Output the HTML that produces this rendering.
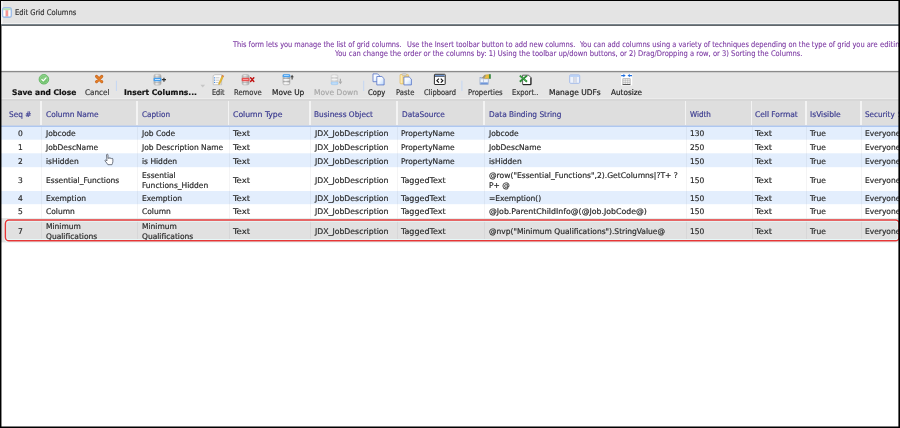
<!DOCTYPE html>
<html lang="en">
<head>
<meta charset="utf-8">
<title>Edit Grid Columns</title>
<style>
html,body{margin:0;padding:0;}
body{width:900px;height:428px;position:relative;overflow:hidden;background:#fff;font-family:"Liberation Sans",sans-serif;}
#win{position:absolute;left:0;top:0;width:900px;height:428px;overflow:hidden;background:#fff;will-change:transform;}
.b{position:absolute;}
.t{position:absolute;white-space:pre;line-height:10px;height:10px;font-family:'DejaVu Sans Condensed', 'Liberation Sans', sans-serif;transform-origin:0 50%;-webkit-text-stroke:0.18px;}
svg{position:absolute;overflow:visible;}
</style>
</head>
<body>
<div id="win">
<!-- title bar -->
<div class="b" style="left:0;top:0;width:900px;height:23px;background:#e4e4e4;"></div>
<div class="b" style="left:1px;top:1px;width:1.5px;height:23px;background:#f0f0f0;"></div>
<div class="b" style="left:0;top:23px;width:900px;height:1px;background:#f1f1f1;"></div>
<div class="b" style="left:0;top:24px;width:900px;height:1px;background:#79848b;"></div>
<div class="b" style="left:0;top:25px;width:900px;height:1px;background:#61666a;"></div>
<!-- info panel -->
<div class="b" style="left:0;top:26px;width:900px;height:45px;background:#fff;"></div>
<div class="b" style="left:0;top:70px;width:900px;height:1px;background:#f3f3f3;"></div>
<div class="b" style="left:0;top:71px;width:900px;height:1px;background:#8b8b8b;"></div>
<div class="b" style="left:0;top:72px;width:900px;height:1px;background:#cdcdcd;"></div>
<!-- toolbar -->
<div class="b" style="left:0;top:73px;width:900px;height:25px;background:#e5e5e5;"></div>
<div class="b" style="left:0;top:98px;width:900px;height:1px;background:#ececec;"></div>
<div class="b" style="left:0;top:99px;width:900px;height:2px;background:#d7d7d7;"></div>
<!-- header -->
<div class="b" style="left:0;top:101px;width:900px;height:24px;background:#dedede;"></div>
<div class="b" style="left:0;top:125px;width:900px;height:1px;background:#c9d3e6;"></div>
<div class="b" style="left:0;top:126px;width:900px;height:1px;background:#aec7f0;"></div>
<!-- rows -->
<svg width="900" height="428" viewBox="0 0 900 428" style="left:0;top:0;">
<rect x="0" y="127" width="900" height="12.7" fill="#e3eefd"/>
<rect x="0" y="153.3" width="900" height="13.9" fill="#e3eefd"/>
<rect x="0" y="191" width="900" height="13.2" fill="#e3eefd"/>
<rect x="0" y="218.1" width="900" height="24.3" fill="#e1e1e1"/>
</svg>
<!-- column separators -->
<div class="b" style="left:40.0px;top:101px;width:1.6px;height:24px;background:#f3f3f3;"></div>
<div class="b" style="left:41.0px;top:127px;width:1px;height:115px;background:rgba(60,70,90,0.06);"></div>
<div class="b" style="left:136.1px;top:101px;width:1.6px;height:24px;background:#f3f3f3;"></div>
<div class="b" style="left:137.1px;top:127px;width:1px;height:115px;background:rgba(60,70,90,0.06);"></div>
<div class="b" style="left:227.5px;top:101px;width:1.6px;height:24px;background:#f3f3f3;"></div>
<div class="b" style="left:228.5px;top:127px;width:1px;height:115px;background:rgba(60,70,90,0.06);"></div>
<div class="b" style="left:309.1px;top:101px;width:1.6px;height:24px;background:#f3f3f3;"></div>
<div class="b" style="left:310.1px;top:127px;width:1px;height:115px;background:rgba(60,70,90,0.06);"></div>
<div class="b" style="left:396.4px;top:101px;width:1.6px;height:24px;background:#f3f3f3;"></div>
<div class="b" style="left:397.4px;top:127px;width:1px;height:115px;background:rgba(60,70,90,0.06);"></div>
<div class="b" style="left:483.4px;top:101px;width:1.6px;height:24px;background:#f3f3f3;"></div>
<div class="b" style="left:484.4px;top:127px;width:1px;height:115px;background:rgba(60,70,90,0.06);"></div>
<div class="b" style="left:684.7px;top:101px;width:1.6px;height:24px;background:#f3f3f3;"></div>
<div class="b" style="left:685.7px;top:127px;width:1px;height:115px;background:rgba(60,70,90,0.06);"></div>
<div class="b" style="left:750.7px;top:101px;width:1.6px;height:24px;background:#f3f3f3;"></div>
<div class="b" style="left:751.7px;top:127px;width:1px;height:115px;background:rgba(60,70,90,0.06);"></div>
<div class="b" style="left:805.1px;top:101px;width:1.6px;height:24px;background:#f3f3f3;"></div>
<div class="b" style="left:806.1px;top:127px;width:1px;height:115px;background:rgba(60,70,90,0.06);"></div>
<div class="b" style="left:860.1px;top:101px;width:1.6px;height:24px;background:#f3f3f3;"></div>
<div class="b" style="left:861.1px;top:127px;width:1px;height:115px;background:rgba(60,70,90,0.06);"></div>
<!-- red highlight -->
<svg width="900" height="428" viewBox="0 0 900 428" style="left:0;top:0;">
<rect x="5.4" y="220.1" width="893.7" height="20.7" rx="3.6" fill="none" stroke="#e6f8f8" stroke-width="3.4"/>
<rect x="5.4" y="220.1" width="893.7" height="20.7" rx="3.6" fill="none" stroke="#e63636" stroke-width="1.5"/>
</svg>
<div id="soft" style="position:absolute;left:0;top:0;width:900px;height:428px;filter:blur(0.4px);">
<!--ICONS_START--><svg width="900" height="428" viewBox="0 0 900 428" style="left:0;top:0;">
<defs>
<linearGradient id="cyl" x1="0" x2="1" y1="0" y2="0"><stop offset="0" stop-color="#b4b4b4"/><stop offset="0.4" stop-color="#efefef"/><stop offset="1" stop-color="#a6a6a6"/></linearGradient>
<linearGradient id="cyld" x1="0" x2="1" y1="0" y2="0"><stop offset="0" stop-color="#cfcfcf"/><stop offset="0.45" stop-color="#ececec"/><stop offset="1" stop-color="#c8c8c8"/></linearGradient>
<linearGradient id="pg" x1="0" x2="1" y1="0" y2="1"><stop offset="0" stop-color="#ffffff"/><stop offset="0.45" stop-color="#f4f9ff"/><stop offset="1" stop-color="#b9d6fb"/></linearGradient>
<radialGradient id="grn" cx="0.5" cy="0.4" r="0.6"><stop offset="0" stop-color="#8fd48a"/><stop offset="0.7" stop-color="#6cc068"/><stop offset="1" stop-color="#4aa94a"/></radialGradient>
</defs>
<!-- title icon -->
<g>
<rect x="2.7" y="7.7" width="8.5" height="9.4" rx="1.8" fill="#eef4fc" stroke="#9fbde9" stroke-width="1.6"/>
<rect x="3.4" y="8.3" width="7" height="2" fill="#b4e2b4"/>
<rect x="5.5" y="10.3" width="2.8" height="6" fill="#f59696"/>
<rect x="3.4" y="10.3" width="1.8" height="6" fill="#fff"/>
<rect x="8.6" y="10.3" width="1.8" height="6" fill="#fff"/>
</g>
<!-- save and close -->
<circle cx="43.9" cy="79.3" r="4.8" fill="url(#grn)" stroke="#58b258" stroke-width="0.8"/>
<circle cx="43.9" cy="79.3" r="4" fill="none" stroke="#a4dba2" stroke-width="0.6"/>
<path d="M41.9 79.5 L43.3 80.9 L46 77.8" fill="none" stroke="#fff" stroke-width="1.25" stroke-linecap="round" stroke-linejoin="round"/>
<!-- cancel -->
<path d="M96.5 76.4 L101.8 81.7 M101.8 76.4 L96.5 81.7" stroke="#c96a22" stroke-width="3" stroke-linecap="round"/>
<path d="M96.6 76.5 L101.7 81.6 M101.7 76.5 L96.6 81.6" stroke="#e57f28" stroke-width="1.5" stroke-linecap="round"/>
<!-- separators -->
<rect x="115.9" y="80.7" width="1" height="10.3" fill="#c4d6f3"/>
<rect x="363.2" y="80.7" width="1" height="10.3" fill="#c4d6f3"/>
<rect x="461.4" y="80.7" width="1" height="10.3" fill="#c4d6f3"/>
<!-- insert columns -->
<g>
<rect x="153.9" y="74.3" width="7.2" height="10.8" rx="1.8" fill="url(#cyl)" stroke="#a8a8a8" stroke-width="0.5"/>
<rect x="154.2" y="76.6" width="6.6" height="0.7" fill="#9a9a9a" opacity="0.7"/><rect x="154.2" y="82.2" width="6.6" height="0.7" fill="#9a9a9a" opacity="0.7"/>
<rect x="153.6" y="77.8" width="7.8" height="3.5" rx="0.9" fill="#46a0f0"/>
<rect x="155" y="79.1" width="5" height="0.9" fill="#d8ecff"/>
<path d="M161.9 79.7 H166 M163.95 77.7 V81.7" stroke="#333" stroke-width="1.2"/>
</g>
<path d="M200.4 84.8 H205.1 L202.75 87.4 Z" fill="#c6c6c6"/>
<!-- edit -->
<g>
<path d="M213.2 75.6 L215 74.7 H221.6 V84.7 H213.2 Z" fill="#fbfbfb" stroke="#a9a9a9" stroke-width="0.6"/>
<rect x="214" y="77.3" width="1.2" height="1.1" fill="#4b8de0"/><rect x="214" y="79.6" width="1.2" height="1.1" fill="#4b8de0"/><rect x="214" y="81.9" width="1.2" height="1.1" fill="#4b8de0"/>
<rect x="215.9" y="77.5" width="3.6" height="0.7" fill="#b5b5b5"/><rect x="215.9" y="79.8" width="3.2" height="0.7" fill="#b5b5b5"/><rect x="215.9" y="82.1" width="2.6" height="0.7" fill="#b5b5b5"/>
<path d="M222.3 75.2 L223.7 75.9 L220 84 L218.6 84.6 L218.6 83.3 Z" fill="#f0c030" stroke="#b88a18" stroke-width="0.4"/>
<path d="M222.3 75.2 L223.7 75.9 L223.3 76.8 L221.9 76.1 Z" fill="#e05050"/>
</g>
<!-- remove -->
<g>
<rect x="242" y="74.5" width="7.2" height="10.4" rx="1.8" fill="url(#cyl)" stroke="#a8a8a8" stroke-width="0.5"/>
<rect x="242.3" y="76.6" width="6.6" height="0.7" fill="#9a9a9a" opacity="0.7"/><rect x="242.3" y="82.1" width="6.6" height="0.7" fill="#9a9a9a" opacity="0.7"/>
<rect x="241.7" y="77.8" width="7.8" height="3.5" rx="0.9" fill="#e85050"/>
<rect x="243" y="79.1" width="5.2" height="0.8" fill="#f6b4b4"/>
<path d="M250.6 77.8 L253.8 81.4 M253.8 77.8 L250.6 81.4" stroke="#c01414" stroke-width="1.5" stroke-linecap="round"/>
</g>
<!-- move up -->
<g>
<rect x="282.9" y="74.4" width="7.1" height="10.4" rx="1.8" fill="url(#cyl)" stroke="#a8a8a8" stroke-width="0.5"/>
<rect x="283.2" y="77.9" width="6.5" height="0.8" fill="#8e8e8e" opacity="0.75"/><rect x="283.2" y="81.3" width="6.5" height="0.8" fill="#8e8e8e" opacity="0.75"/>
<rect x="283.6" y="79.2" width="5.7" height="1.2" fill="#fbfbfb"/><rect x="283.6" y="82.6" width="5.7" height="1.2" fill="#fbfbfb"/>
<rect x="282.6" y="74.2" width="7.7" height="3" rx="1.2" fill="#46a0f0"/>
<rect x="284" y="75" width="4.8" height="1" fill="#a8d6ff"/>
<path d="M290.3 77.3 L292.1 74.7 L293.9 77.3 Z M291.5 77 H292.7 V79.4 H291.5 Z" fill="#4a4a4a"/>
</g>
<!-- move down (disabled) -->
<g>
<rect x="331" y="74.6" width="7" height="10.2" rx="1.8" fill="url(#cyld)" stroke="#cfcfcf" stroke-width="0.5"/>
<rect x="331.3" y="77.6" width="6.4" height="0.7" fill="#c4c4c4"/><rect x="331.3" y="80.8" width="6.4" height="0.7" fill="#c4c4c4"/>
<rect x="331.7" y="75.7" width="5.6" height="1.2" fill="#f3f3f3"/><rect x="331.7" y="78.9" width="5.6" height="1.2" fill="#f3f3f3"/>
<rect x="330.8" y="81.7" width="7.4" height="3.1" rx="1.2" fill="#a6cff6"/>
<rect x="332.2" y="82.7" width="4.6" height="0.9" fill="#cfe6fb"/>
<path d="M338.5 81.5 L340.4 84.2 L342.3 81.5 Z M339.8 78.8 H341 V81.7 H339.8 Z" fill="#a9a9a9"/>
</g>
<!-- copy -->
<g>
<path d="M373 73.9 H377.6 L379.5 75.8 V81.7 H373 Z" fill="url(#pg)" stroke="#4d6cc4" stroke-width="0.75"/>
<path d="M376.8 76.5 H381.9 L384.1 78.7 V84.9 H376.8 Z" fill="url(#pg)" stroke="#4d6cc4" stroke-width="0.75"/>
</g>
<!-- paste -->
<g>
<rect x="400" y="74.4" width="8.5" height="9.5" rx="1" fill="#f5d682" stroke="#dfb450" stroke-width="0.6"/><rect x="400.6" y="75.2" width="1.6" height="8" fill="#fbeab8"/>
<rect x="402.2" y="73.6" width="4.2" height="1.9" rx="0.8" fill="#d9d9d9" stroke="#a4a4a4" stroke-width="0.4"/>
<path d="M403.9 77 H409.2 L411.4 79.2 V84.9 H403.9 Z" fill="url(#pg)" stroke="#4d6cc4" stroke-width="0.75"/>
</g>
<!-- clipboard -->
<g>
<rect x="434.4" y="74.3" width="10.8" height="10.2" rx="0.6" fill="#fdfdfd" stroke="#2a2a2a" stroke-width="1"/>
<rect x="435" y="74.9" width="9.6" height="1.5" fill="#6d93cc"/>
<rect x="435" y="76.4" width="9.6" height="0.6" fill="#2a2a2a"/>
<path d="M438.9 78.7 L436.9 80.7 L438.9 82.7 M440.8 78.7 L442.8 80.7 L440.8 82.7" fill="none" stroke="#151515" stroke-width="1.15"/>
</g>
<!-- properties -->
<g>
<rect x="480" y="77.6" width="8.2" height="6.8" fill="#eef3fb" stroke="#7f97c4" stroke-width="0.6"/>
<rect x="480.3" y="82.4" width="7.6" height="1.8" fill="#6f96d8"/>
<rect x="480.3" y="77.9" width="7.6" height="1.4" fill="#b9c7de"/>
<rect x="483.4" y="79.4" width="0.6" height="3" fill="#9fb0cc"/>
<path d="M482.4 77.8 L484.6 75 L489.3 74.6 L489.3 78.3 L485.5 78.6 Z" fill="#e9bd3e" stroke="#b98d22" stroke-width="0.4"/>
<path d="M482.4 77.8 L484.6 75 L486 75.4 L484 78.4 Z" fill="#8f8f8f"/>
<rect x="489.2" y="74.2" width="1.5" height="4.6" fill="#1f7a2a"/>
</g>
<!-- export -->
<g>
<path d="M522.6 75.2 H528.6 L530.8 77.4 V84.5 H522.6 Z" fill="#fff" stroke="#3a3a3a" stroke-width="0.8"/>
<path d="M523 84.7 H531 V77.6" fill="none" stroke="#111" stroke-width="0.9"/>
<path d="M519.8 75.6 L527 81.8 M527 75.6 L519.8 81.8" stroke="#2c8e36" stroke-width="1.9"/><path d="M520.4 75.9 L526.4 81.3" stroke="#5fb868" stroke-width="0.6"/>
</g>
<!-- manage udfs -->
<g>
<rect x="569.7" y="74.9" width="10" height="8.4" rx="0.9" fill="#eef3fc" stroke="#8dacea" stroke-width="0.75"/>
<rect x="570.1" y="75.3" width="9.2" height="1.5" fill="#afcbf5"/>
<rect x="573.3" y="77" width="3" height="5.8" fill="#d9dce6"/>
<rect x="573.1" y="77" width="0.45" height="5.8" fill="#b9c8e4"/><rect x="576.2" y="77" width="0.45" height="5.8" fill="#b9c8e4"/>
</g>
<!-- autosize -->
<g>
<rect x="621" y="73.8" width="11.2" height="11.6" fill="#fff"/>
<rect x="622.9" y="78.8" width="7.2" height="5.6" fill="#f4f4f4" stroke="#8d8d8d" stroke-width="0.6"/>
<path d="M622.9 80.7 H630.1 M622.9 82.5 H630.1 M625.3 78.8 V84.4 M627.7 78.8 V84.4" stroke="#a8a8a8" stroke-width="0.5"/>
<rect x="622.6" y="84.1" width="7.8" height="0.9" fill="#4a4a4a"/>
<path d="M621.2 75.6 H624 M629.2 75.6 H632" stroke="#1f6fe0" stroke-width="1.1"/>
<path d="M623.4 73.9 L625.7 75.6 L623.4 77.3 Z M629.8 73.9 L627.5 75.6 L629.8 77.3 Z" fill="#1f6fe0"/>
</g>
<!-- mouse cursor (hand) -->
<g transform="translate(107.2 154.4) scale(1.13) translate(-107.2 -154.1)">
<path d="M106.6 154.6 c0-0.9 1.3-0.9 1.3 0 v3 l0.4 0 c0-0.8 1.2-0.8 1.2 0 l0.3 0.1 c0-0.7 1.1-0.7 1.1 0.1 l0.3 0.2 c0.1-0.6 1-0.5 1 0.2 v2.4 c0 1.2-0.6 1.8-0.8 2.6 h-3.6 c-0.5-1-1.5-2-2.4-3.2 c-0.5-0.8 0.4-1.3 1-0.7 l0.6 0.6 z" fill="#fff" stroke="#4e5462" stroke-width="0.7" stroke-linejoin="round"/>
</g>
</svg>
<!--ICONS_END-->
<div class="t" style="left:14.8px;top:7.50px;font-size:7.8px;color:#333;transform:scaleX(0.9687);">Edit Grid Columns</div>
<div class="t" style="left:232.7px;top:39.50px;font-size:7.8px;color:#7b38a2;transform:scaleX(0.9422);-webkit-text-stroke:0.1px;">This form lets you manage the list of grid columns.</div>
<div class="t" style="left:407.0px;top:39.50px;font-size:7.8px;color:#7b38a2;transform:scaleX(0.9511);-webkit-text-stroke:0.1px;">Use the Insert toolbar button to add new columns.</div>
<div class="t" style="left:580.0px;top:39.50px;font-size:7.8px;color:#7b38a2;transform:scaleX(0.9475);-webkit-text-stroke:0.1px;">You can add columns using a variety of techniques depending on the type of grid you are</div>
<div class="t" style="left:880.2px;top:39.50px;font-size:7.8px;color:#7b38a2;transform:scaleX(0.9900);-webkit-text-stroke:0.1px;">editing.</div>
<div class="t" style="left:335.4px;top:48.50px;font-size:7.8px;color:#7b38a2;transform:scaleX(0.9656);-webkit-text-stroke:0.1px;">You can change the order or the columns by: 1) Using the toolbar up/down buttons, or 2) Drag/Dropping a row, or 3) Sorting the Columns.</div>
<div class="t" style="left:11.7px;top:87.50px;font-size:7.8px;color:#111;transform:scaleX(1.0706);font-weight:bold;">Save and Close</div>
<div class="t" style="left:85.0px;top:87.50px;font-size:7.8px;color:#333;transform:scaleX(1.0344);">Cancel</div>
<div class="t" style="left:123.7px;top:87.50px;font-size:7.8px;color:#111;transform:scaleX(1.0778);font-weight:bold;">Insert Columns...</div>
<div class="t" style="left:212.0px;top:87.50px;font-size:7.8px;color:#333;transform:scaleX(0.9269);">Edit</div>
<div class="t" style="left:234.0px;top:87.50px;font-size:7.8px;color:#333;transform:scaleX(0.9741);">Remove</div>
<div class="t" style="left:271.7px;top:87.50px;font-size:7.8px;color:#222;transform:scaleX(1.0542);">Move Up</div>
<div class="t" style="left:314.0px;top:87.50px;font-size:7.8px;color:#a8a8a8;transform:scaleX(1.0752);">Move Down</div>
<div class="t" style="left:368.3px;top:87.50px;font-size:7.8px;color:#222;transform:scaleX(0.9721);">Copy</div>
<div class="t" style="left:396.0px;top:87.50px;font-size:7.8px;color:#333;transform:scaleX(0.9732);">Paste</div>
<div class="t" style="left:423.7px;top:87.50px;font-size:7.8px;color:#333;transform:scaleX(0.9552);">Clipboard</div>
<div class="t" style="left:468.0px;top:87.50px;font-size:7.8px;color:#333;transform:scaleX(0.9796);">Properties</div>
<div class="t" style="left:512.0px;top:87.50px;font-size:7.8px;color:#333;transform:scaleX(0.9591);">Export..</div>
<div class="t" style="left:549.0px;top:87.50px;font-size:7.8px;color:#222;transform:scaleX(1.0698);">Manage UDFs</div>
<div class="t" style="left:611.3px;top:87.50px;font-size:7.8px;color:#222;transform:scaleX(1.0405);">Autosize</div>
<div class="t" style="left:8.7px;top:109.50px;font-size:7.8px;color:#3c3c90;transform:scaleX(1.0448);">Seq #</div>
<div class="t" style="left:45.7px;top:109.50px;font-size:7.8px;color:#3c3c90;transform:scaleX(1.0563);">Column Name</div>
<div class="t" style="left:141.5px;top:109.50px;font-size:7.8px;color:#3c3c90;transform:scaleX(1.0334);">Caption</div>
<div class="t" style="left:232.7px;top:109.50px;font-size:7.8px;color:#3c3c90;transform:scaleX(1.0977);">Column Type</div>
<div class="t" style="left:314.4px;top:109.50px;font-size:7.8px;color:#3c3c90;transform:scaleX(1.0515);">Business Object</div>
<div class="t" style="left:401.5px;top:109.50px;font-size:7.8px;color:#3c3c90;transform:scaleX(1.0507);">DataSource</div>
<div class="t" style="left:488.7px;top:109.50px;font-size:7.8px;color:#3c3c90;transform:scaleX(1.0560);">Data Binding String</div>
<div class="t" style="left:690.0px;top:109.50px;font-size:7.8px;color:#3c3c90;transform:scaleX(1.0258);">Width</div>
<div class="t" style="left:755.1px;top:109.50px;font-size:7.8px;color:#3c3c90;transform:scaleX(1.0667);">Cell Format</div>
<div class="t" style="left:810.0px;top:109.50px;font-size:7.8px;color:#3c3c90;transform:scaleX(1.0725);">IsVisible</div>
<div class="t" style="left:865.2px;top:109.50px;font-size:7.8px;color:#3c3c90;transform:scaleX(1.0308);">Security</div>
<div class="t" style="left:897.5px;top:109.50px;font-size:7.8px;color:#3c3c90;transform:scaleX(1.0700);">Schema</div>
<div class="t" style="left:18.3px;top:128.50px;font-size:7.8px;color:#2a2a2a;transform:scaleX(1.0700);">0</div>
<div class="t" style="left:45.8px;top:128.50px;font-size:7.8px;color:#2a2a2a;transform:scaleX(1.0700);">Jobcode</div>
<div class="t" style="left:141.5px;top:128.50px;font-size:7.8px;color:#2a2a2a;transform:scaleX(1.0700);">Job Code</div>
<div class="t" style="left:232.7px;top:128.50px;font-size:7.8px;color:#2a2a2a;transform:scaleX(1.2245);">Text</div>
<div class="t" style="left:314.5px;top:128.50px;font-size:7.8px;color:#2a2a2a;transform:scaleX(1.1045);">JDX_JobDescription</div>
<div class="t" style="left:401.4px;top:128.50px;font-size:7.8px;color:#2a2a2a;transform:scaleX(1.0647);">PropertyName</div>
<div class="t" style="left:488.5px;top:128.50px;font-size:7.8px;color:#2a2a2a;transform:scaleX(1.0700);">Jobcode</div>
<div class="t" style="left:690.0px;top:128.50px;font-size:7.8px;color:#2a2a2a;transform:scaleX(1.0700);">130</div>
<div class="t" style="left:755.1px;top:128.50px;font-size:7.8px;color:#2a2a2a;transform:scaleX(1.2245);">Text</div>
<div class="t" style="left:810.0px;top:128.50px;font-size:7.8px;color:#2a2a2a;transform:scaleX(1.0700);">True</div>
<div class="t" style="left:865.0px;top:128.50px;font-size:7.8px;color:#2a2a2a;transform:scaleX(1.0700);">Everyone</div>
<div class="t" style="left:18.3px;top:142.50px;font-size:7.8px;color:#2a2a2a;transform:scaleX(1.0700);">1</div>
<div class="t" style="left:45.8px;top:142.50px;font-size:7.8px;color:#2a2a2a;transform:scaleX(1.0700);">JobDescName</div>
<div class="t" style="left:141.5px;top:142.50px;font-size:7.8px;color:#2a2a2a;transform:scaleX(1.0700);">Job Description Name</div>
<div class="t" style="left:232.7px;top:142.50px;font-size:7.8px;color:#2a2a2a;transform:scaleX(1.2245);">Text</div>
<div class="t" style="left:314.5px;top:142.50px;font-size:7.8px;color:#2a2a2a;transform:scaleX(1.1045);">JDX_JobDescription</div>
<div class="t" style="left:401.4px;top:142.50px;font-size:7.8px;color:#2a2a2a;transform:scaleX(1.0647);">PropertyName</div>
<div class="t" style="left:488.5px;top:142.50px;font-size:7.8px;color:#2a2a2a;transform:scaleX(1.0700);">JobDescName</div>
<div class="t" style="left:690.0px;top:142.50px;font-size:7.8px;color:#2a2a2a;transform:scaleX(1.0700);">250</div>
<div class="t" style="left:755.1px;top:142.50px;font-size:7.8px;color:#2a2a2a;transform:scaleX(1.2245);">Text</div>
<div class="t" style="left:810.0px;top:142.50px;font-size:7.8px;color:#2a2a2a;transform:scaleX(1.0700);">True</div>
<div class="t" style="left:865.0px;top:142.50px;font-size:7.8px;color:#2a2a2a;transform:scaleX(1.0700);">Everyone</div>
<div class="t" style="left:18.3px;top:156.50px;font-size:7.8px;color:#2a2a2a;transform:scaleX(1.0700);">2</div>
<div class="t" style="left:45.8px;top:156.50px;font-size:7.8px;color:#2a2a2a;transform:scaleX(1.0700);">isHidden</div>
<div class="t" style="left:141.5px;top:156.50px;font-size:7.8px;color:#2a2a2a;transform:scaleX(1.0700);">is Hidden</div>
<div class="t" style="left:232.7px;top:156.50px;font-size:7.8px;color:#2a2a2a;transform:scaleX(1.2245);">Text</div>
<div class="t" style="left:314.5px;top:156.50px;font-size:7.8px;color:#2a2a2a;transform:scaleX(1.1045);">JDX_JobDescription</div>
<div class="t" style="left:401.4px;top:156.50px;font-size:7.8px;color:#2a2a2a;transform:scaleX(1.0647);">PropertyName</div>
<div class="t" style="left:488.5px;top:156.50px;font-size:7.8px;color:#2a2a2a;transform:scaleX(1.0700);">isHidden</div>
<div class="t" style="left:690.0px;top:156.50px;font-size:7.8px;color:#2a2a2a;transform:scaleX(1.0700);">150</div>
<div class="t" style="left:755.1px;top:156.50px;font-size:7.8px;color:#2a2a2a;transform:scaleX(1.2245);">Text</div>
<div class="t" style="left:810.0px;top:156.50px;font-size:7.8px;color:#2a2a2a;transform:scaleX(1.0700);">True</div>
<div class="t" style="left:865.0px;top:156.50px;font-size:7.8px;color:#2a2a2a;transform:scaleX(1.0700);">Everyone</div>
<div class="t" style="left:18.3px;top:175.50px;font-size:7.8px;color:#2a2a2a;transform:scaleX(1.0700);">3</div>
<div class="t" style="left:45.8px;top:175.50px;font-size:7.8px;color:#2a2a2a;transform:scaleX(1.0700);">Essential_Functions</div>
<div class="t" style="left:141.5px;top:170.50px;font-size:7.8px;color:#2a2a2a;transform:scaleX(1.0700);">Essential</div>
<div class="t" style="left:141.5px;top:180.50px;font-size:7.8px;color:#2a2a2a;transform:scaleX(1.0700);">Functions_Hidden</div>
<div class="t" style="left:232.7px;top:175.50px;font-size:7.8px;color:#2a2a2a;transform:scaleX(1.2245);">Text</div>
<div class="t" style="left:314.5px;top:175.50px;font-size:7.8px;color:#2a2a2a;transform:scaleX(1.1045);">JDX_JobDescription</div>
<div class="t" style="left:401.4px;top:175.50px;font-size:7.8px;color:#2a2a2a;transform:scaleX(1.1431);">TaggedText</div>
<div class="t" style="left:488.5px;top:170.50px;font-size:7.8px;color:#2a2a2a;transform:scaleX(1.0842);">@row(&quot;Essential_Functions&quot;,2).GetColumns|?T+ ?</div>
<div class="t" style="left:488.5px;top:180.50px;font-size:7.8px;color:#2a2a2a;transform:scaleX(1.0700);">P+ @</div>
<div class="t" style="left:690.0px;top:175.50px;font-size:7.8px;color:#2a2a2a;transform:scaleX(1.0700);">150</div>
<div class="t" style="left:755.1px;top:175.50px;font-size:7.8px;color:#2a2a2a;transform:scaleX(1.2245);">Text</div>
<div class="t" style="left:810.0px;top:175.50px;font-size:7.8px;color:#2a2a2a;transform:scaleX(1.0700);">True</div>
<div class="t" style="left:865.0px;top:175.50px;font-size:7.8px;color:#2a2a2a;transform:scaleX(1.0700);">Everyone</div>
<div class="t" style="left:18.3px;top:193.50px;font-size:7.8px;color:#2a2a2a;transform:scaleX(1.0700);">4</div>
<div class="t" style="left:45.8px;top:193.50px;font-size:7.8px;color:#2a2a2a;transform:scaleX(1.0700);">Exemption</div>
<div class="t" style="left:141.5px;top:193.50px;font-size:7.8px;color:#2a2a2a;transform:scaleX(1.0700);">Exemption</div>
<div class="t" style="left:232.7px;top:193.50px;font-size:7.8px;color:#2a2a2a;transform:scaleX(1.2245);">Text</div>
<div class="t" style="left:314.5px;top:193.50px;font-size:7.8px;color:#2a2a2a;transform:scaleX(1.1045);">JDX_JobDescription</div>
<div class="t" style="left:401.4px;top:193.50px;font-size:7.8px;color:#2a2a2a;transform:scaleX(1.1431);">TaggedText</div>
<div class="t" style="left:488.5px;top:193.50px;font-size:7.8px;color:#2a2a2a;transform:scaleX(1.0700);">=Exemption()</div>
<div class="t" style="left:690.0px;top:193.50px;font-size:7.8px;color:#2a2a2a;transform:scaleX(1.0700);">150</div>
<div class="t" style="left:755.1px;top:193.50px;font-size:7.8px;color:#2a2a2a;transform:scaleX(1.2245);">Text</div>
<div class="t" style="left:810.0px;top:193.50px;font-size:7.8px;color:#2a2a2a;transform:scaleX(1.0700);">True</div>
<div class="t" style="left:865.0px;top:193.50px;font-size:7.8px;color:#2a2a2a;transform:scaleX(1.0700);">Everyone</div>
<div class="t" style="left:18.3px;top:206.50px;font-size:7.8px;color:#2a2a2a;transform:scaleX(1.0700);">5</div>
<div class="t" style="left:45.8px;top:206.50px;font-size:7.8px;color:#2a2a2a;transform:scaleX(1.0700);">Column</div>
<div class="t" style="left:141.5px;top:206.50px;font-size:7.8px;color:#2a2a2a;transform:scaleX(1.0700);">Column</div>
<div class="t" style="left:232.7px;top:206.50px;font-size:7.8px;color:#2a2a2a;transform:scaleX(1.2245);">Text</div>
<div class="t" style="left:314.5px;top:206.50px;font-size:7.8px;color:#2a2a2a;transform:scaleX(1.1045);">JDX_JobDescription</div>
<div class="t" style="left:401.4px;top:206.50px;font-size:7.8px;color:#2a2a2a;transform:scaleX(1.1431);">TaggedText</div>
<div class="t" style="left:488.5px;top:206.50px;font-size:7.8px;color:#2a2a2a;transform:scaleX(1.1138);">@Job.ParentChildInfo@(@Job.JobCode@)</div>
<div class="t" style="left:690.0px;top:206.50px;font-size:7.8px;color:#2a2a2a;transform:scaleX(1.0700);">150</div>
<div class="t" style="left:755.1px;top:206.50px;font-size:7.8px;color:#2a2a2a;transform:scaleX(1.2245);">Text</div>
<div class="t" style="left:810.0px;top:206.50px;font-size:7.8px;color:#2a2a2a;transform:scaleX(1.0700);">True</div>
<div class="t" style="left:865.0px;top:206.50px;font-size:7.8px;color:#2a2a2a;transform:scaleX(1.0700);">Everyone</div>
<div class="t" style="left:18.3px;top:226.50px;font-size:7.8px;color:#2a2a2a;transform:scaleX(1.0700);">7</div>
<div class="t" style="left:45.8px;top:221.50px;font-size:7.8px;color:#2a2a2a;transform:scaleX(1.0700);">Minimum</div>
<div class="t" style="left:45.8px;top:231.50px;font-size:7.8px;color:#2a2a2a;transform:scaleX(1.0700);">Qualifications</div>
<div class="t" style="left:141.5px;top:221.50px;font-size:7.8px;color:#2a2a2a;transform:scaleX(1.0700);">Minimum</div>
<div class="t" style="left:141.5px;top:231.50px;font-size:7.8px;color:#2a2a2a;transform:scaleX(1.0700);">Qualifications</div>
<div class="t" style="left:232.7px;top:226.50px;font-size:7.8px;color:#2a2a2a;transform:scaleX(1.2245);">Text</div>
<div class="t" style="left:314.5px;top:226.50px;font-size:7.8px;color:#2a2a2a;transform:scaleX(1.1045);">JDX_JobDescription</div>
<div class="t" style="left:401.4px;top:226.50px;font-size:7.8px;color:#2a2a2a;transform:scaleX(1.1431);">TaggedText</div>
<div class="t" style="left:488.5px;top:226.50px;font-size:7.8px;color:#2a2a2a;transform:scaleX(1.0735);">@nvp(&quot;Minimum Qualifications&quot;).StringValue@</div>
<div class="t" style="left:690.0px;top:226.50px;font-size:7.8px;color:#2a2a2a;transform:scaleX(1.0700);">150</div>
<div class="t" style="left:755.1px;top:226.50px;font-size:7.8px;color:#2a2a2a;transform:scaleX(1.2245);">Text</div>
<div class="t" style="left:810.0px;top:226.50px;font-size:7.8px;color:#2a2a2a;transform:scaleX(1.0700);">True</div>
<div class="t" style="left:865.0px;top:226.50px;font-size:7.8px;color:#2a2a2a;transform:scaleX(1.0700);">Everyone</div>
</div>
<!-- window frame -->
<div class="b" style="left:0;top:0;width:900px;height:1px;background:#000;"></div>
<div class="b" style="left:0;top:0;width:1px;height:428px;background:#000;"></div>
<div class="b" style="left:1px;top:26px;width:1px;height:402px;background:rgba(0,0,0,0.45);"></div>
<div class="b" style="left:899px;top:0;width:1px;height:428px;background:#000;"></div>
<div class="b" style="left:898px;top:0;width:1px;height:428px;background:rgba(0,0,0,0.6);"></div>
<div class="b" style="left:0;top:427px;width:900px;height:1px;background:#000;"></div>
<div class="b" style="left:0;top:426px;width:900px;height:1px;background:rgba(0,0,0,0.5);"></div>
</div>
</body>
</html>
